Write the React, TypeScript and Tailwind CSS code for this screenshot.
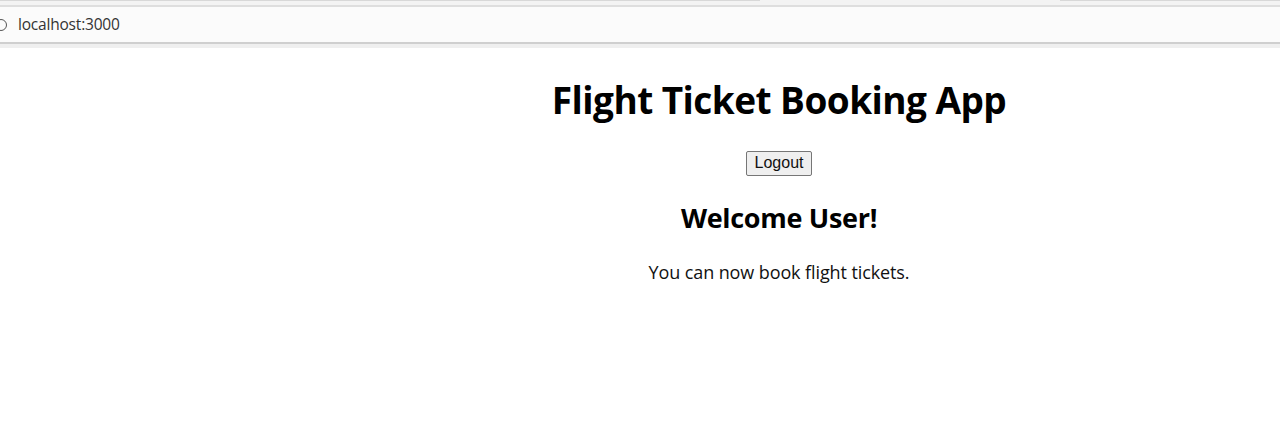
import React from "react";

export default function App() {
  return (
    <div className="min-h-[421px] w-[1280px] bg-white overflow-hidden">
      {/* browser address bar */}
      <div className="flex flex-col">
        <div className="h-[5px] bg-[#f3f3f3] flex">
          <div className="w-[760px] border-t border-[#d8d8d8]" />
          <div className="w-[300px]" />
          <div className="flex-1 border-t border-[#d8d8d8]" />
        </div>
        <div className="h-[2px] bg-[#dedede]" />
        <div className="h-[35px] bg-[#fbfbfb] flex items-center gap-[11px]">
          <span className="-ml-[5px] w-[12px] h-[12px] rounded-full border border-[#555]" />
          <span className="text-[15.5px] text-[#333] font-['Open_Sans',sans-serif] tracking-[-0.2px]">localhost:3000</span>
        </div>
        <div className="h-[2px] bg-[#cfcfcf]" />
        <div className="h-[4px] bg-[#efefef]" />
      </div>

      {/* page content */}
      <div className="pl-[278px] text-center text-black font-['Open_Sans',sans-serif]">
        <h1 className="mt-[25px] mb-[24px] text-[37px] font-bold leading-[53px] tracking-[-0.55px]">
          Flight Ticket Booking App
        </h1>
        <button className="h-[25px] px-[7.5px] text-[16px] leading-none text-[#111] bg-[#efefef] border border-[#767676] rounded-[2px] font-['Liberation_Sans',Arial,sans-serif]">
          Logout
        </button>
        <h2 className="mt-[22px] text-[27px] font-bold leading-[40px] tracking-[-0.3px]">Welcome User!</h2>
        <p className="mt-[21px] text-[18px] leading-[27px] tracking-[-0.1px] text-[#111]">You can now book flight tickets.</p>
      </div>
    </div>
  );
}
